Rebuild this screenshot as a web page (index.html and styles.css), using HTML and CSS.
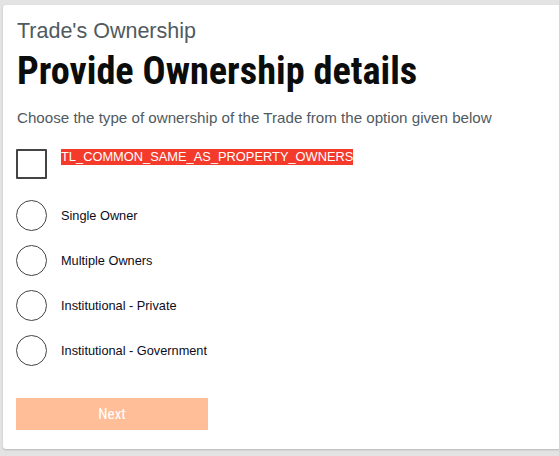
FILE: index.html
```html
<!DOCTYPE html>
<html>
<head>
<meta charset="utf-8">
<link rel="stylesheet" href="styles.css">
</head>
<body>
<div class="card">
  <div class="subtitle">Trade's Ownership</div>
  <h1 class="heading">Provide Ownership details</h1>
  <p class="desc">Choose the type of ownership of the Trade from the option given below</p>
  <div class="check-row">
    <span class="checkbox"></span>
    <span class="check-label">TL_COMMON_SAME_AS_PROPERTY_OWNERS</span>
  </div>
  <div class="radios">
    <div class="radio-row"><span class="radio"></span><span class="radio-label">Single Owner</span></div>
    <div class="radio-row"><span class="radio"></span><span class="radio-label">Multiple Owners</span></div>
    <div class="radio-row"><span class="radio"></span><span class="radio-label">Institutional - Private</span></div>
    <div class="radio-row"><span class="radio"></span><span class="radio-label">Institutional - Government</span></div>
  </div>
  <button class="next">Next</button>
</div>
</body>
</html>
```

FILE: styles.css
```css
html, body {
  margin: 0;
  padding: 0;
}
body {
  background: #e3e3e3;
  font-family: "Liberation Sans", Arial, sans-serif;
  overflow: hidden;
  height: 456px;
}
.card {
  margin: 5px 0 0 3px;
  width: 570px;
  height: 444px;
  box-sizing: border-box;
  background: #fff;
  border-radius: 3px;
  box-shadow: 0 1px 2px rgba(0,0,0,0.2);
  padding: 15px 0 0 13px;
  display: flex;
  flex-direction: column;
  align-items: flex-start;
}
.subtitle {
  font-size: 21.5px;
  line-height: 23px;
  color: #505a5f;
  padding-left: 1px;
}
.heading {
  margin: 6px 0 0 1px;
  font-family: "Roboto Condensed", Roboto, sans-serif;
  font-stretch: condensed;
  font-weight: 700;
  font-size: 38.3px;
  line-height: 44px;
  color: #0b0c0c;
}
.desc {
  margin: 16px 0 0 1px;
  font-size: 15.15px;
  line-height: 18px;
  color: #505a5f;
}
.check-row {
  margin-top: 22px;
  display: flex;
  align-items: flex-start;
  gap: 14px;
}
.checkbox {
  width: 31px;
  height: 30px;
  box-sizing: border-box;
  border: 2px solid #444;
  border-radius: 1px;
}
.check-label {
  background: #f33a2b;
  color: #fff;
  font-size: 12.85px;
  line-height: 16px;
}
.radios {
  margin-top: 21px;
  display: flex;
  flex-direction: column;
  gap: 14px;
}
.radio-row {
  display: flex;
  align-items: center;
  gap: 14px;
}
.radio {
  width: 31px;
  height: 31px;
  box-sizing: border-box;
  border: 1.5px solid #444;
  border-radius: 50%;
}
.radio-label {
  font-size: 12.75px;
  color: #0b0c1c;
}
.next {
  margin-top: 32px;
  width: 192px;
  height: 32px;
  border: none;
  background: #ffbe98;
  color: #fff;
  font-family: "Roboto Condensed", Roboto, sans-serif;
  font-size: 15px;
  padding: 0;
}
```
